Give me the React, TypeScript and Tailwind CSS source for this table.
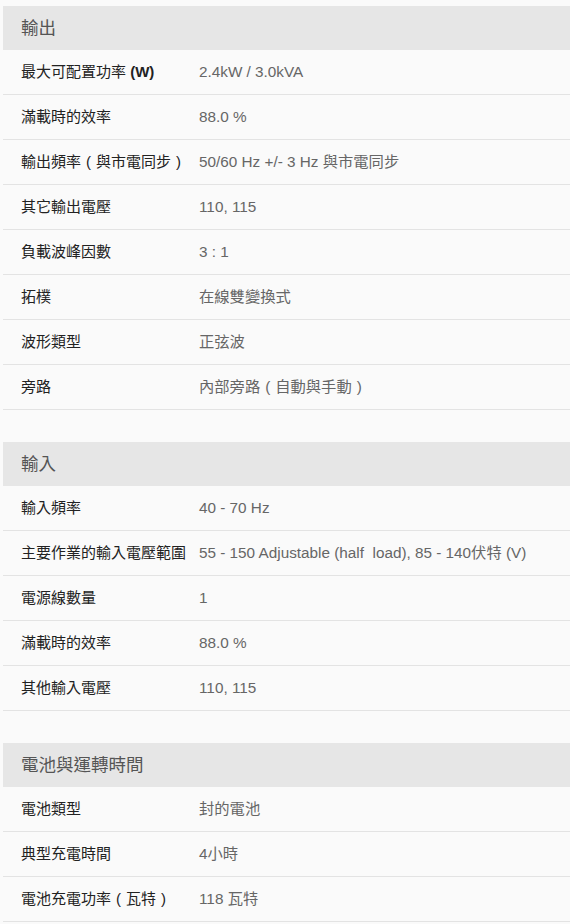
import React from "react";

type Row = [string, string];
type Section = { title: string; rows: Row[] };

const sections: Section[] = [
  {
    title: "輸出",
    rows: [
      ["最大可配置功率 (W)", "2.4kW / 3.0kVA"],
      ["滿載時的效率", "88.0 %"],
      ["輸出頻率（與市電同步）", "50/60 Hz +/- 3 Hz 與市電同步"],
      ["其它輸出電壓", "110, 115"],
      ["負載波峰因數", "3 : 1"],
      ["拓樸", "在線雙變換式"],
      ["波形類型", "正弦波"],
      ["旁路", "內部旁路（自動與手動）"],
    ],
  },
  {
    title: "輸入",
    rows: [
      ["輸入頻率", "40 - 70 Hz"],
      ["主要作業的輸入電壓範圍", "55 - 150 Adjustable (half\u00a0 load), 85 - 140伏特 (V)"],
      ["電源線數量", "1"],
      ["滿載時的效率", "88.0 %"],
      ["其他輸入電壓", "110, 115"],
    ],
  },
  {
    title: "電池與運轉時間",
    rows: [
      ["電池類型", "封的電池"],
      ["典型充電時間", "4小時"],
      ["電池充電功率（瓦特）", "118 瓦特"],
    ],
  },
];

function Text({ text }: { text: string }) {
  const parts = text.split(/([（）]|\(W\))/);
  return (
    <>
      {parts.map((p, i) => {
        if (p === "（")
          return (
            <span key={i} className="inline-block w-[15px] text-center">
              (
            </span>
          );
        if (p === "）")
          return (
            <span key={i} className="inline-block w-[15px] text-center">
              )
            </span>
          );
        if (p === "(W)")
          return (
            <span key={i} className="font-bold">
              (W)
            </span>
          );
        return <React.Fragment key={i}>{p}</React.Fragment>;
      })}
    </>
  );
}

export default function App() {
  return (
    <div
      lang="zh-TW"
      className="min-h-[924px] w-[570px] overflow-hidden bg-[#fafafa] pl-[3px] pt-[6px]"
      style={{ fontFamily: '"Liberation Sans", Arial, "Noto Sans CJK TC", sans-serif' }}
    >
      {sections.map((s) => (
        <div key={s.title} className="mb-8">
          <div className="flex h-[44px] items-center bg-[#e6e6e6] pl-[18px] text-[17.5px] text-[#555]">
            {s.title}
          </div>
          {s.rows.map(([label, value], i) => (
            <div
              key={i}
              className="flex h-[45px] items-center border-b border-[#e3e3e3] pl-[18px]"
            >
              <div className="w-[178px] shrink-0 whitespace-nowrap text-[15px] text-[#222]">
                <Text text={label} />
              </div>
              <div className="whitespace-nowrap text-[15.3px] text-[#666]">
                <Text text={value} />
              </div>
            </div>
          ))}
        </div>
      ))}
    </div>
  );
}
